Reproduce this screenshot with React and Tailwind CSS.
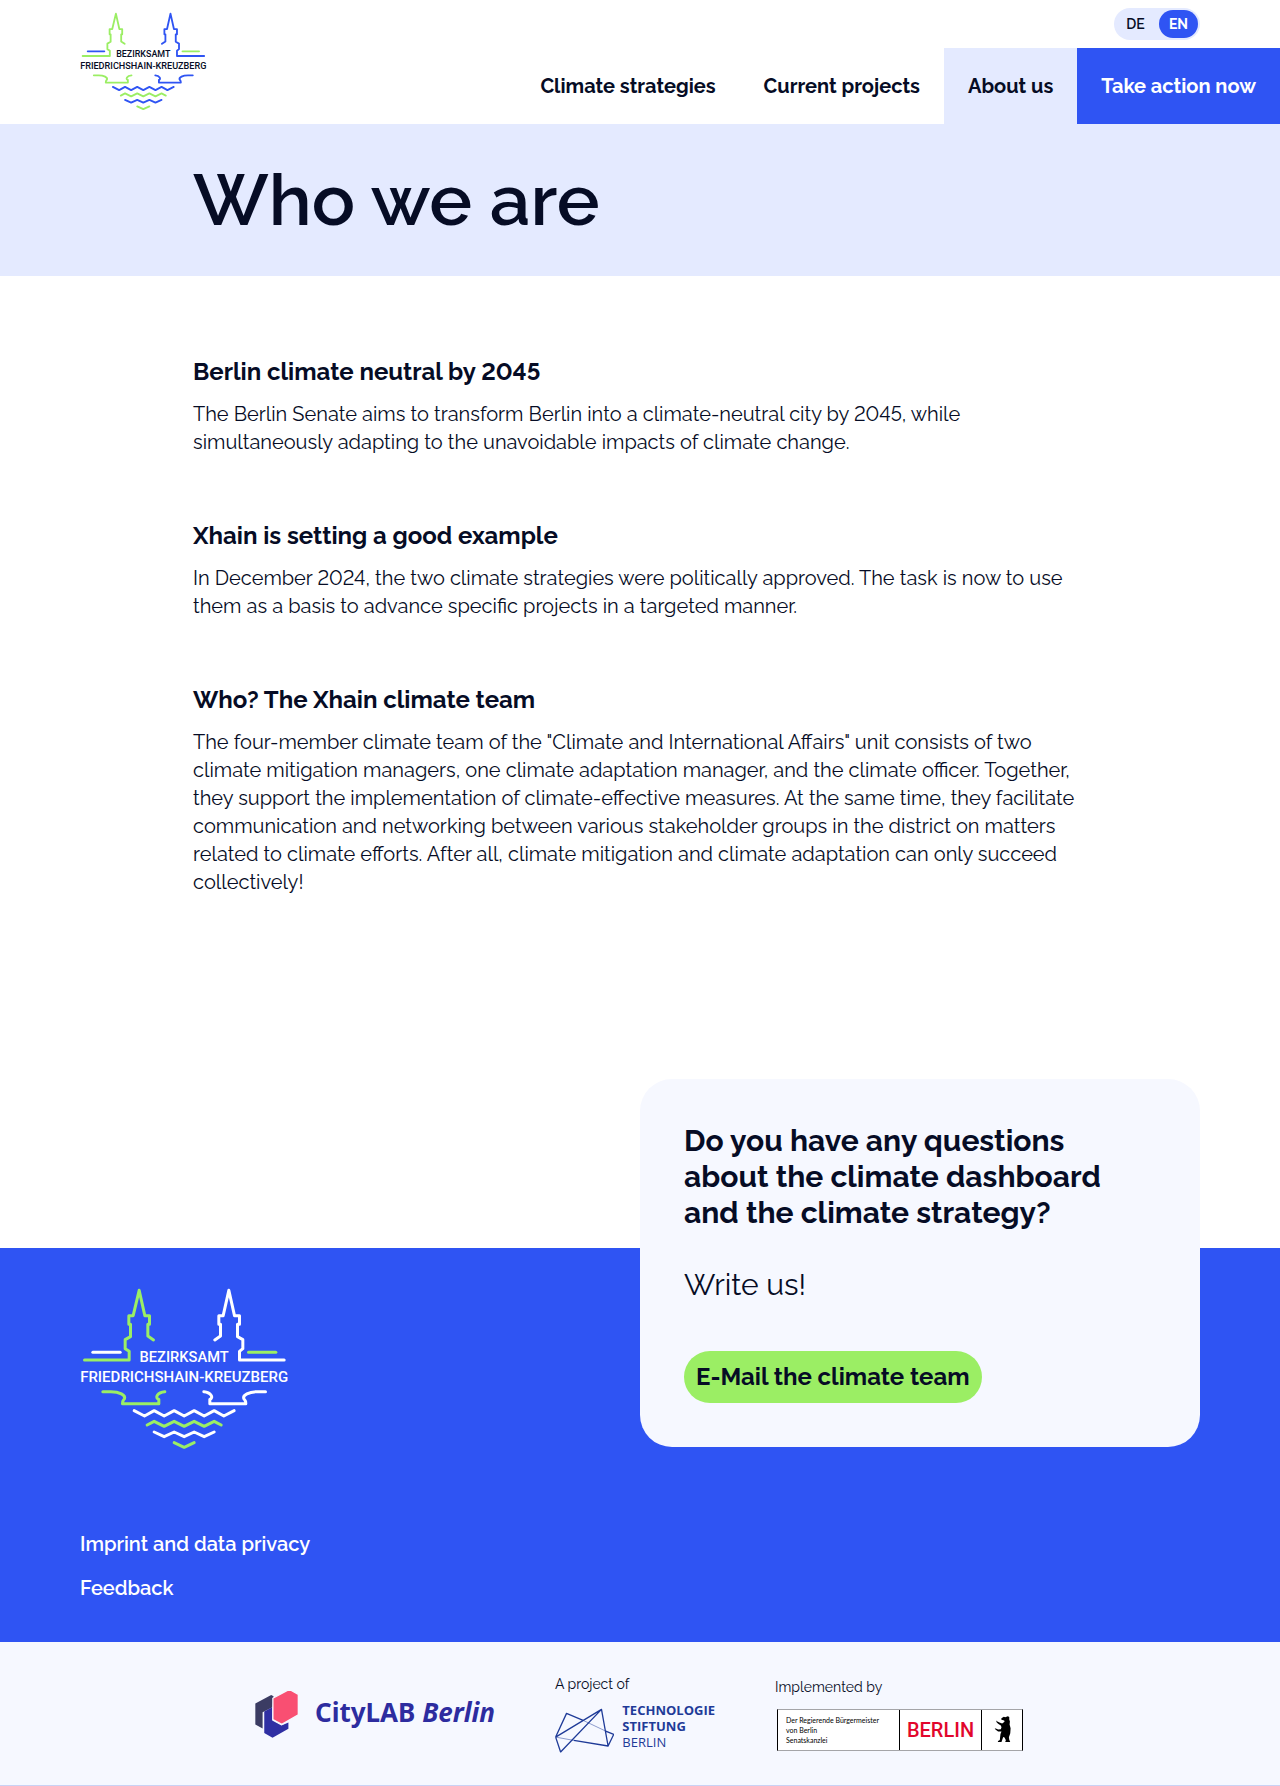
const sections = [
  {
    title: "Berlin climate neutral by 2045",
    text: "The Berlin Senate aims to transform Berlin into a climate-neutral city by 2045, while simultaneously adapting to the unavoidable impacts of climate change.",
  },
  {
    title: "Xhain is setting a good example",
    text: "In December 2024, the two climate strategies were politically approved. The task is now to use them as a basis to advance specific projects in a targeted manner.",
  },
  {
    title: "Who? The Xhain climate team",
    text: 'The four-member climate team of the "Climate and International Affairs" unit consists of two climate mitigation managers, one climate adaptation manager, and the climate officer. Together, they support the implementation of climate-effective measures. At the same time, they facilitate communication and networking between various stakeholder groups in the district on matters related to climate efforts. After all, climate mitigation and climate adaptation can only succeed collectively!',
  },
];

function DistrictLogo({ className, accent, text }) {
  const green = "#9bee64";
  return (
    <svg
      viewBox="60 54 626 486"
      className={className}
      fill="none"
      strokeWidth="9"
      strokeLinecap="round"
      strokeLinejoin="round"
      role="img"
      aria-label="Bezirksamt Friedrichshain-Kreuzberg"
    >
      <g stroke={green}>
        <path d="M73 270H207V244L195 236V209L211 200V163H206V137H219L237 61L254 137H268V163H263V198L280 210" />
        <path d="M565 247H647" />
        <path d="M128 365H152C178 365 197 376 193 386C190 391 187 390 187 401H296V388C283 384 291 367 314 365" />
        <path d="M261 465L282 454L312 469L342 454L372 469L402 454L432 469L462 454L483 465" />
        <path d="M342 518L372 532L402 518" />
      </g>
      <g stroke={accent}>
        <path d="M464 210L481 198V163H476V137H489L506 61L523 137H538V163H532V200L548 209V236L538 244V270H672" />
        <path d="M98 247H180" />
        <path d="M616 365H592C566 365 547 376 551 386C554 391 557 390 557 401H449V388C461 384 453 367 431 365" />
        <path d="M222 422L253 438L282 422L312 438L342 422L372 438L402 422L432 438L462 422L491 438L522 422" />
        <path d="M282 486L312 500L342 486L372 500L402 486L432 500L462 486" />
      </g>
      <g fill={text} textAnchor="middle" className="font-['Roboto',sans-serif] font-medium">
        <text x="372" y="275" fontSize="44">BEZIRKSAMT</text>
        <text x="372" y="335" fontSize="45">FRIEDRICHSHAIN-KREUZBERG</text>
      </g>
    </svg>
  );
}

function Header() {
  return (
    <header className="flex items-start justify-between pl-20">
      <a href="#home" className="pt-3">
        <DistrictLogo className="h-[99px] w-[127px]" accent="#2f54f3" text="#060c25" />
      </a>
      <div className="flex flex-col">
        <div className="flex h-12 items-center justify-end pr-20">
          <div className="flex h-8 items-center rounded-full bg-[#e4eaff] p-0.5 text-sm font-semibold">
            <button type="button" className="h-7 w-[43px] rounded-full pr-1">DE</button>
            <button type="button" aria-pressed="true" className="h-7 w-[39px] rounded-full bg-[#2f54f3] font-bold text-white">EN</button>
          </div>
        </div>
        <nav className="flex h-19 text-xl font-bold whitespace-nowrap">
          <a href="#strategies" className="flex items-center px-6">Climate strategies</a>
          <a href="#projects" className="flex items-center px-6">Current projects</a>
          <a href="#about" aria-current="page" className="flex items-center bg-[#e4eaff] px-6">About us</a>
          <a href="#action" className="flex items-center bg-[#2f54f3] px-6 text-white">Take action now</a>
        </nav>
      </div>
    </header>
  );
}

function ContactCard() {
  return (
    <section className="-mt-[169px] flex flex-col items-start rounded-[32px] bg-[#f6f8ff] p-11 text-[#060c25]">
      <h2 className="max-w-[432px] text-3xl leading-9 font-bold">
        Do you have any questions about the climate dashboard and the climate strategy?
      </h2>
      <p className="mt-9 text-3xl leading-9">Write us!</p>
      <a href="#mail" className="mt-12 flex h-13 items-center rounded-full bg-[#9bee64] px-3 text-2xl font-bold">
        E-Mail the climate team
      </a>
    </section>
  );
}

function CityLabLogo() {
  return (
    <div className="flex w-60 items-center justify-between text-[#2d2c9f]">
      <svg viewBox="45 148 130 145" className="h-12 w-[43px]" aria-hidden="true">
        <path fill="#3b3c63" d="M46 189L94 163L101 167V172L98 200L68 215V264L46 252Z" />
        <path fill="#2f2fa3" d="M73 213L97 200V240L125 255L146 246V265L98 292L73 278Z" />
        <path fill="#f94f72" stroke="#f6f8ff" strokeWidth="4" d="M99 173L149 146L176 161V223L126 252L99 237Z" />
      </svg>
      <p className="pb-1 font-['Noto_Sans',sans-serif] text-[26px] leading-8 font-bold whitespace-nowrap">
        CityLAB <em>Berlin</em>
      </p>
    </div>
  );
}

function TechLogo() {
  return (
    <div className="flex w-40 flex-col gap-2">
      <p className="text-sm leading-5">A project of</p>
      <div className="flex items-start gap-2 text-[#1f3b98]">
        <svg viewBox="76 146 180 136" className="mt-1.5 h-[45px] w-15" fill="none" stroke="currentColor" strokeWidth="4" strokeLinejoin="round" aria-hidden="true">
          <path d="M78 234L217 150L237 261L133 244M78 234L93 279L217 150M78 234L111 162L163 184M228 215L254 226L237 261" />
          <path strokeWidth="1.5" d="M163 184L228 215M78 234L133 244" />
        </svg>
        <p className="font-['Open_Sans',sans-serif] text-[13px] leading-4 font-bold">
          TECHNOLOGIE<br />STIFTUNG<br /><span className="font-normal">BERLIN</span>
        </p>
      </div>
    </div>
  );
}

function BerlinLogo() {
  return (
    <div className="flex w-[250px] flex-col gap-3">
      <p className="text-sm leading-5">Implemented by</p>
      <div className="mx-0.5 flex h-[42px] divide-x divide-black border-x border-y border-x-black border-y-[#a5a5a8] bg-white text-black">
        <p className="flex flex-1 items-center pl-2 font-['Lato',sans-serif] text-[7px] leading-[10px]">
          Der Regierende Bürgermeister<br />von Berlin<br />Senatskanzlei
        </p>
        <p className="flex w-[82px] items-center justify-center font-['Roboto',sans-serif] text-xl font-medium text-[#e2062c]">BERLIN</p>
        <div className="flex w-10 items-center justify-center">
          <svg viewBox="698 168 50 80" className="h-[27px] w-[17px]" fill="currentColor" aria-hidden="true">
            <path d="M722 173L727 170L731 172L739 169L743 171L743 178L745 184L744 193L747 204L746 219L742 231L743 238L746 245H731L733 240L729 232L725 230L722 239L720 245H709L710 242L715 239L717 221L720 214L710 214L702 208L700 204L705 206L710 208L718 207L720 201L718 196L711 192L706 187L704 181L708 184L714 187L722 190L729 185L728 181L720 179L719 176Z" />
          </svg>
        </div>
      </div>
    </div>
  );
}

export default function App() {
  return (
    <div className="bg-white font-['Raleway','Lato',sans-serif] text-[#060c25] lining-nums">
      <Header />
      <div className="bg-[#e4eaff] py-10">
        <h1 className="mx-auto max-w-4xl px-px text-7xl leading-none font-semibold">Who we are</h1>
      </div>
      <main className="mx-auto flex max-w-4xl flex-col gap-16 px-px pt-20 pb-[352px]">
        {sections.map((s) => (
          <section key={s.title} className="flex flex-col gap-3">
            <h2 className="text-2xl leading-8 font-bold">{s.title}</h2>
            <p className="text-xl leading-7">{s.text}</p>
          </section>
        ))}
      </main>
      <footer>
        <div className="grid grid-cols-2 items-start bg-[#2f54f3] px-20 pb-10 text-white">
          <div className="flex flex-col items-start gap-20 pt-10">
            <DistrictLogo className="h-[162px] w-[209px]" accent="#ffffff" text="#ffffff" />
            <nav className="flex flex-col gap-4 text-xl leading-7 font-semibold">
              <a href="#imprint">Imprint and data privacy</a>
              <a href="#feedback">Feedback</a>
            </nav>
          </div>
          <ContactCard />
        </div>
        <div className="flex h-36 items-center justify-center gap-15 border-b border-[#c9d2f5] bg-[#f6f8ff]">
          <CityLabLogo />
          <TechLogo />
          <BerlinLogo />
        </div>
      </footer>
    </div>
  );
}
